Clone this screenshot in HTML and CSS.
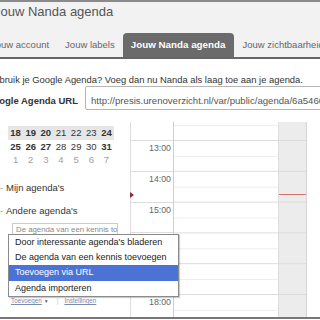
FILE: index.html
```html
<!DOCTYPE html>
<html lang="nl">
<head>
  <meta charset="UTF-8" />
  <meta name="viewport" content="width=device-width, initial-scale=1.0" />
  <title>Jouw Nanda agenda</title>
  <link rel="stylesheet" href="styles.css">
</head>
<body>
  <div class="page">
    <div class="head">
      <h1>Jouw Nanda agenda</h1>
      <ul class="tabs">
        <li>Jouw account</li>
        <li>Jouw labels</li>
        <li class="active">Jouw Nanda agenda</li>
        <li>Jouw zichtbaarheid</li>
      </ul>
    </div>

    <div class="content">
      <p class="intro">Gebruik je Google Agenda? Voeg dan nu Nanda als laag toe aan je agenda.</p>
      <div class="url-row">
        <label>Google Agenda URL</label>
        <input type="text" value="http://presis.urenoverzicht.nl/var/public/agenda/6a5460c2b1" />
      </div>

      <!-- ingesloten google agenda -->
      <div class="gcal">
        <div class="side">
          <div class="minical">
            <div class="week current">
              <span class="b">18</span><span class="b">19</span><span class="b">20</span><span>21</span><span>22</span><span>23</span><span class="b">24</span>
            </div>
            <div class="week">
              <span class="b">25</span><span class="b">26</span><span class="b">27</span><span>28</span><span>29</span><span>30</span><span class="b">31</span>
            </div>
            <div class="week next">
              <span>1</span><span>2</span><span>3</span><span>4</span><span>5</span><span>6</span><span>7</span>
            </div>
          </div>

          <div class="cal-list mine"><span class="dash">-</span>Mijn agenda's</div>
          <div class="cal-list other"><span class="dash">-</span>Andere agenda's</div>
          <div class="friend-box">De agenda van een kennis toevoegen</div>

          <div class="side-links">
            <a href="#">Toevoegen</a><span class="caret">&#9660;</span><span class="sep">|</span><a href="#">Instellingen</a>
          </div>

          <ul class="menu">
            <li>Door interessante agenda's bladeren</li>
            <li>De agenda van een kennis toevoegen</li>
            <li class="hover">Toevoegen via URL</li>
            <li>Agenda importeren</li>
          </ul>
        </div>

        <div class="grid">
          <div class="times">
            <div class="first"></div>
            <div class="hour">13:00</div>
            <div class="hour">14:00</div>
            <div class="hour">15:00</div>
            <div class="hour">16:00</div>
            <div class="hour">17:00</div>
            <div class="hour">18:00</div>
            <div class="hour">19:00</div>
            <span class="now-arrow"></span>
          </div>
          <div class="day"></div>
          <div class="day today">
            <span class="now-line"></span>
          </div>
        </div>
      </div>
    </div>
  </div>
</body>
</html>
```

FILE: styles.css
```css
body {
  margin: 0;
  width: 320px;
  height: 320px;
  overflow: hidden;
  background: #fff;
  font-family: "Liberation Sans", Arial, sans-serif;
}
.page {
  margin-left: -20px;
  width: 360px;
  border-top: 2px solid #8a8a8a;
  border-bottom: 2px solid #777;
  background: #fff;
}

/* kop en tabs */
.head {
  background: #f2f2f2;
}
.head h1 {
  margin: 0;
  padding: 1px 0 0 14px;
  font-size: 13px;
  line-height: 18px;
  font-weight: normal;
  color: #555;
}
.tabs {
  display: flex;
  list-style: none;
  margin: 12px 0 0;
  padding: 0 0 0 3px;
  border-bottom: 2px solid #666;
}
.tabs li {
  height: 24px;
  line-height: 24px;
  padding: 0 8px;
  font-size: 9.5px;
  color: #666;
  white-space: nowrap;
}
.tabs li.active {
  background: #6b6b6b;
  color: #fff;
  font-weight: bold;
  font-size: 9.8px;
  padding: 0 9px 0 8px;
  border-radius: 4px 4px 0 0;
}

/* uitleg en url */
.intro {
  margin: 15px 0 0;
  padding-left: 7px;
  font-size: 9.4px;
  line-height: 12px;
  color: #333;
  white-space: nowrap;
}
.url-row {
  display: flex;
  align-items: center;
  height: 24px;
  padding-left: 6px;
}
.url-row label {
  font-size: 9.5px;
  font-weight: bold;
  color: #333;
  padding-top: 4px;
  white-space: nowrap;
}
.url-row input {
  flex: none;
  width: 280px;
  margin-left: 7px;
  height: 24px;
  box-sizing: border-box;
  padding: 4px 5px 0;
  border: 1px solid #b5b5b5;
  border-radius: 2px;
  font-family: "Liberation Sans", Arial, sans-serif;
  font-size: 9.6px;
  color: #555;
  background: #fff;
}

/* google agenda */
.gcal {
  display: flex;
  height: 207px;
  overflow: hidden;
  background: #fff;
}
.side {
  position: relative;
  width: 150px;
  flex: none;
}
.minical {
  margin: 16px 0 0 28px;
  width: 106px;
}
.week {
  display: grid;
  grid-template-columns: repeat(7, 1fr);
  height: 13.5px;
  line-height: 13.5px;
  font-size: 9.5px;
  color: #333;
  text-align: center;
}
.week.current {
  background: #e6e6e6;
}
.week .b {
  font-weight: bold;
}
.week.next {
  color: #a0a0a0;
}
.cal-list {
  margin-left: 20px;
  font-size: 9.5px;
  line-height: 12px;
  color: #333;
  white-space: nowrap;
}
.cal-list.mine {
  margin-top: 15.5px;
}
.cal-list.other {
  margin-top: 11px;
}
.dash {
  display: inline-block;
  width: 6px;
  color: #999;
}
.friend-box {
  margin: 6px 0 0 32px;
  width: 106px;
  height: 11px;
  box-sizing: border-box;
  border: 1px solid #ccc;
  border-bottom: none;
  padding-left: 3px;
  font-size: 7.8px;
  line-height: 11px;
  color: #8a8a8a;
  white-space: nowrap;
  overflow: hidden;
}
.side-links {
  margin: 62px 0 0 31px;
  font-size: 6.3px;
  line-height: 9px;
  color: #8090b0;
  white-space: nowrap;
}
.side-links a {
  color: #7a8ab0;
}
.side-links .caret {
  margin-left: 2px;
  font-size: 5px;
  color: #667;
}
.side-links .sep {
  margin: 0 6px 0 8px;
  color: #ccc;
}
.menu {
  position: absolute;
  top: 124px;
  left: 28px;
  width: 169px;
  margin: 0;
  padding: 0;
  list-style: none;
  background: #fff;
  border: 1px solid #8a8a8a;
  box-shadow: 1px 1px 1px rgba(0,0,0,0.2);
  z-index: 2;
}
.menu li {
  height: 15.2px;
  line-height: 15.2px;
  padding-left: 6px;
  font-size: 9px;
  color: #222;
  white-space: nowrap;
}
.menu li.hover {
  background: #4b73d6;
  color: #fff;
}

/* dagweergave */
.grid {
  display: flex;
  margin-top: 12px;
  height: 195px;
}
.times {
  position: relative;
  width: 42px;
  border-left: 1px solid #ddd;
  border-right: 1px solid #cfcfcf;
}
.times .first {
  height: 18px;
}
.times .hour {
  height: 30.8px;
  box-sizing: border-box;
  border-top: 1px solid #ddd;
  padding: 2px 2px 0 0;
  text-align: right;
  font-size: 8.8px;
  line-height: 10px;
  color: #666;
}
.day {
  position: relative;
  width: 104px;
  border-right: 1px solid #ddd;
  background-image: linear-gradient(to bottom, #dcdcdc 0, #dcdcdc 1px, transparent 1px, transparent 15.4px, #ededed 15.4px, #ededed 16.4px, transparent 16.4px);
  background-size: 100% 30.8px;
  background-position: 0 18px;
}
.day.today {
  width: 27px;
  background-color: #ececec;
  border-right: 1px solid #d5d5d5;
}
.now-line {
  position: absolute;
  top: 72px;
  left: 0;
  right: 0;
  height: 1px;
  background: #d87070;
}
.now-arrow {
  position: absolute;
  top: 70px;
  left: -1px;
  width: 0;
  height: 0;
  border-top: 3px solid transparent;
  border-bottom: 3px solid transparent;
  border-left: 4px solid #8a2f2f;
}
```
